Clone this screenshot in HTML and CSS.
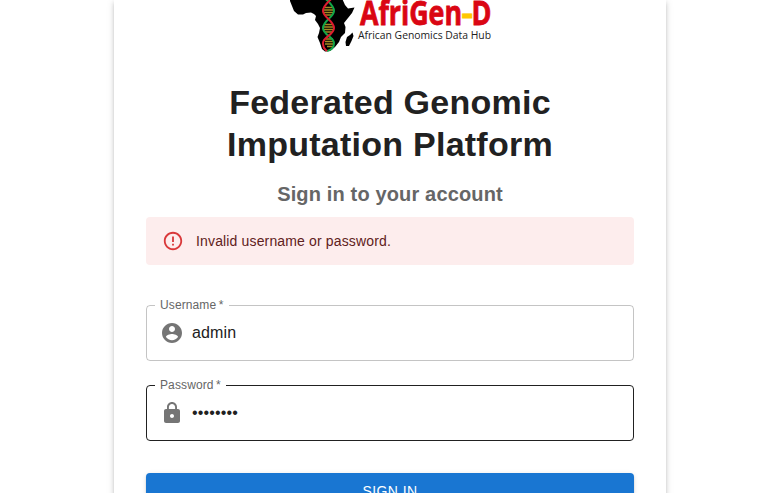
FILE: index.html
```html
<!DOCTYPE html>
<html lang="en">
<head>
<meta charset="utf-8">
<title>Federated Genomic Imputation Platform</title>
<link rel="stylesheet" href="styles.css">
</head>
<body>
<main class="card">
  <svg class="logo" viewBox="0 0 204 56" role="img" aria-label="AfriGen-D">
    <path d="M2-4 2 1 4 6 6 11 10 14.500 15 14.500 18 13 23 12.500 26 14 28 16 27 20 30 24 32 28 31 33 29.500 37 32 43 34 49 37 51.500 42 51 47 47 51 42 53 37 57 33 57.500 27 56 23 60 18 64 13 66.500 7.500 60 8.500 57 5 53-4Z"/>
    <path d="M64.500 32.500 65.500 36 63.500 41 61 46 58 46 57.500 42 59 37 62 35Z"/>
    <path class="rungs" d="M37 7.500h7M36 10h9M36 12.500h9M37 15h7M37 24.500h7M36 27h9M36 29.500h9M37 32h7M38 39h7M37 41.500h9M37 44h9M39 46.500h6"/>
    <path class="strand green" d="M37-2C39 1 46 5 46 11S35 21 35 28 46 37 46 43 42 50 39 51"/>
    <path class="strand red" d="M44-2C42 1 35 5 35 11S46 21 46 28 35 37 35 43 37 49 39 51"/>
    <text class="brand" x="72" y="25" textLength="102" lengthAdjust="spacingAndGlyphs">AfriGen</text>
    <text class="brand dash" x="173.500" y="25" textLength="11.500" lengthAdjust="spacingAndGlyphs">-</text>
    <text class="brand" x="183.500" y="25" textLength="20" lengthAdjust="spacingAndGlyphs">D</text>
    <text class="tagline" x="70" y="38.500" textLength="133" lengthAdjust="spacingAndGlyphs">African Genomics Data Hub</text>
  </svg>
  <h1 class="title">Federated Genomic Imputation Platform</h1>
  <h2 class="subtitle">Sign in to your account</h2>
  <div class="alert" role="alert">
    <svg class="alert-icon" viewBox="0 0 24 24"><path d="M11 15h2v2h-2zm0-8h2v6h-2zm.990-5C6.470 2 2 6.480 2 12s4.470 10 9.990 10C17.520 22 22 17.520 22 12S17.520 2 11.990 2zM12 20c-4.420 0-8-3.580-8-8s3.580-8 8-8 8 3.580 8 8-3.580 8-8 8z"/></svg>
    <span>Invalid username or password.</span>
  </div>
  <form class="form">
    <fieldset class="field">
      <legend><label for="username">Username&#8201;*</label></legend>
      <div class="control">
        <svg class="icon" viewBox="0 0 24 24"><path d="M12 2C6.480 2 2 6.480 2 12s4.480 10 10 10 10-4.480 10-10S17.520 2 12 2zm0 3c1.660 0 3 1.340 3 3s-1.340 3-3 3-3-1.340-3-3 1.340-3 3-3zm0 14.200c-2.500 0-4.710-1.280-6-3.220.030-1.990 4-3.080 6-3.080 1.990 0 5.970 1.090 6 3.080-1.290 1.940-3.500 3.220-6 3.220z"/></svg>
        <input id="username" type="text" value="admin">
      </div>
    </fieldset>
    <fieldset class="field active">
      <legend><label for="password">Password&#8201;*</label></legend>
      <div class="control">
        <svg class="icon" viewBox="0 0 24 24"><path d="M18 8h-1V6c0-2.760-2.240-5-5-5S7 3.240 7 6v2H6c-1.100 0-2 .900-2 2v10c0 1.100.900 2 2 2h12c1.100 0 2-.900 2-2V10c0-1.100-.900-2-2-2zm-6 9c-1.100 0-2-.900-2-2s.900-2 2-2 2 .900 2 2-.900 2-2 2zm3.100-9H8.900V6c0-1.710 1.390-3.100 3.100-3.100 1.710 0 3.100 1.390 3.100 3.100v2z"/></svg>
        <input id="password" type="password" value="password">
      </div>
    </fieldset>
    <button class="submit" type="button">Sign In</button>
  </form>
</main>
</body>
</html>
```
FILE: styles.css
```css
* { box-sizing: border-box; }
html, body { height: 100%; }
body {
  margin: 0;
  overflow: hidden;
  background: #fff;
  color: #212121;
  font-family: "Liberation Sans", Arial, sans-serif;
}
.card {
  width: 552px;
  height: 560px;
  margin: 0 auto;
  padding: 0 32px;
  display: flex;
  flex-direction: column;
  background: #fff;
  box-shadow: 0 3px 3px -2px rgba(0,0,0,.2), 0 3px 4px 0 rgba(0,0,0,.14), 0 1px 8px 0 rgba(0,0,0,.12);
}
.logo {
  width: 204px;
  height: 56px;
  flex: none;
  align-self: center;
  margin-bottom: 25px;
}
.strand { fill: none; stroke-width: 2; }
.red { stroke: #e01b2f; }
.green { stroke: #12a648; }
.rungs { fill: none; stroke: #a68b22; stroke-width: 1.4; }
.brand { font: 700 33.500px "Open Sans", sans-serif; fill: #da0613; stroke: #da0613; stroke-width: .8px; }
.brand.dash { fill: #ffc800; stroke: #ffc800; }
.tagline { font: 400 11.500px "Open Sans", sans-serif; fill: #222; }
.title {
  margin: 0 0 12.900px;
  padding: 0 60px;
  font-size: 34px;
  line-height: 42px;
  letter-spacing: .00735em;
  text-align: center;
}
.subtitle {
  margin: 0 0 7px;
  font-size: 20px;
  line-height: 32px;
  letter-spacing: .0075em;
  text-align: center;
  color: #666;
}
.alert {
  flex: none;
  display: flex;
  align-items: center;
  gap: 12px;
  height: 48px;
  padding: 0 16px;
  border-radius: 4px;
  background: #fdeded;
  color: #5f2120;
  font-size: 14px;
  line-height: 20px;
  letter-spacing: .01071em;
}
.alert-icon { width: 22px; height: 22px; fill: #d9383a; }
.form {
  display: flex;
  flex-direction: column;
  padding-top: 34px;
}
.field {
  height: 62px;
  min-width: 0;
  margin: 0 0 18px;
  padding: 0 14px 0 8px;
  border: 1px solid rgba(0, 0, 0, .23);
  border-radius: 4px;
}
.field.active { border-color: rgba(0, 0, 0, .87); }
.field legend {
  height: 13px;
  padding: 0 5px;
  font-size: 12px;
  line-height: 13px;
  letter-spacing: .00938em;
  color: #666;
}
.control {
  display: flex;
  align-items: center;
  gap: 8px;
  height: 42px;
  padding-left: 5px;
}
.icon { width: 24px; height: 24px; flex: none; fill: rgba(0, 0, 0, .54); }
.control input {
  flex: 1;
  min-width: 0;
  height: 23px;
  margin: 0;
  padding: 0;
  border: 0;
  outline: 0;
  background: none;
  color: inherit;
  font: inherit;
  font-size: 16px;
  letter-spacing: .00938em;
}
.submit {
  height: 36.500px;
  margin-top: 14px;
  padding: 6px 16px;
  border: 0;
  border-radius: 4px;
  background: #1976d2;
  box-shadow: 0 3px 1px -2px rgba(0,0,0,.2), 0 2px 2px 0 rgba(0,0,0,.14), 0 1px 5px 0 rgba(0,0,0,.12);
  color: #fff;
  font: inherit;
  font-size: 14px;
  line-height: 24.500px;
  letter-spacing: .02857em;
  text-transform: uppercase;
}
```
